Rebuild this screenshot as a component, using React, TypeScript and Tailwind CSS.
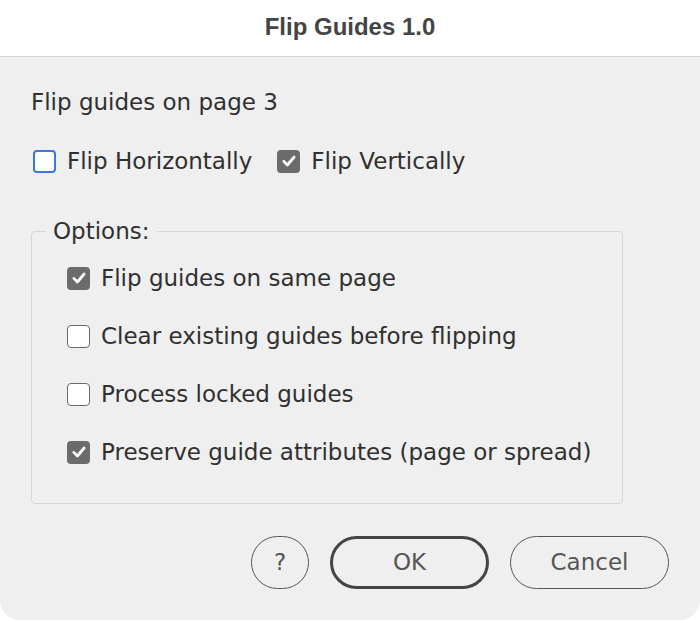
const font = { fontFamily: '"DejaVu Sans", "Liberation Sans", sans-serif' };

const Check = ({ checked, focus }: { checked?: boolean; focus?: boolean }) =>
  checked ? (
    <span className="flex h-[23px] w-[23px] shrink-0 items-center justify-center rounded-[4px] bg-[#6b6b6b]">
      <svg width="16" height="16" viewBox="0 0 14 14" fill="none">
        <path d="M2.5 7.3 L5.6 10.5 L11.5 3.5" stroke="#fff" strokeWidth="2.4" strokeLinecap="round" strokeLinejoin="round" />
      </svg>
    </span>
  ) : (
    <span
      className={
        focus
          ? "block h-[23px] w-[23px] shrink-0 rounded-[4px] border-2 border-[#3b78dc] bg-white"
          : "block h-[23px] w-[23px] shrink-0 rounded-[4px] border-[1.5px] border-[#6a6a6a] bg-white"
      }
    />
  );

const Option = ({ label, checked }: { label: string; checked?: boolean }) => (
  <div className="flex h-[58px] items-center gap-[11px] whitespace-nowrap">
    <Check checked={checked} />
    <span>{label}</span>
  </div>
);

export default function App() {
  return (
    <div className="h-[620px] w-[700px] bg-white text-[23px] text-[#303030]" style={font}>
      <div className="flex h-[57px] items-center justify-center border-b border-[#d4d4d4] pb-[3px]">
        <span className="text-[24px] font-bold text-[#444]" style={{ fontFamily: '"Liberation Sans", Arial, sans-serif' }}>
          Flip Guides 1.0
        </span>
      </div>
      <div className="h-[563px] rounded-b-[20px] bg-[#efefef] px-[31px] pt-[30px]">
        <div className="h-[30px] leading-[30px]">Flip guides on page 3</div>
        <div className="mt-[29px] flex h-[30px] items-center whitespace-nowrap">
          <span className="ml-[2px] flex">
            <Check focus />
          </span>
          <span className="ml-[11px]">Flip Horizontally</span>
          <span className="ml-[25px] flex">
            <Check checked />
          </span>
          <span className="ml-[11px]">Flip Vertically</span>
        </div>
        <fieldset className="mt-[40px] w-[592px] rounded-[4px] border-[1.5px] border-[#d6d6d6] pb-[22px] pl-[35px] pr-[10px] pt-[3px]">
          <legend className="-ml-[21px] px-[7px] leading-[30px]">Options:</legend>
          <Option label="Flip guides on same page" checked />
          <Option label="Clear existing guides before flipping" />
          <Option label="Process locked guides" />
          <Option label="Preserve guide attributes (page or spread)" checked />
        </fieldset>
        <div className="mt-[32px] flex justify-end gap-[21px] text-[#555]">
          <button className="flex h-[53px] w-[58px] items-center justify-center rounded-full border-[1.5px] border-[#555]">?</button>
          <button className="flex h-[53px] w-[159px] items-center justify-center rounded-full border-[3.5px] border-[#444]">OK</button>
          <button className="flex h-[53px] w-[159px] items-center justify-center rounded-full border-[1.5px] border-[#555]">Cancel</button>
        </div>
      </div>
    </div>
  );
}
